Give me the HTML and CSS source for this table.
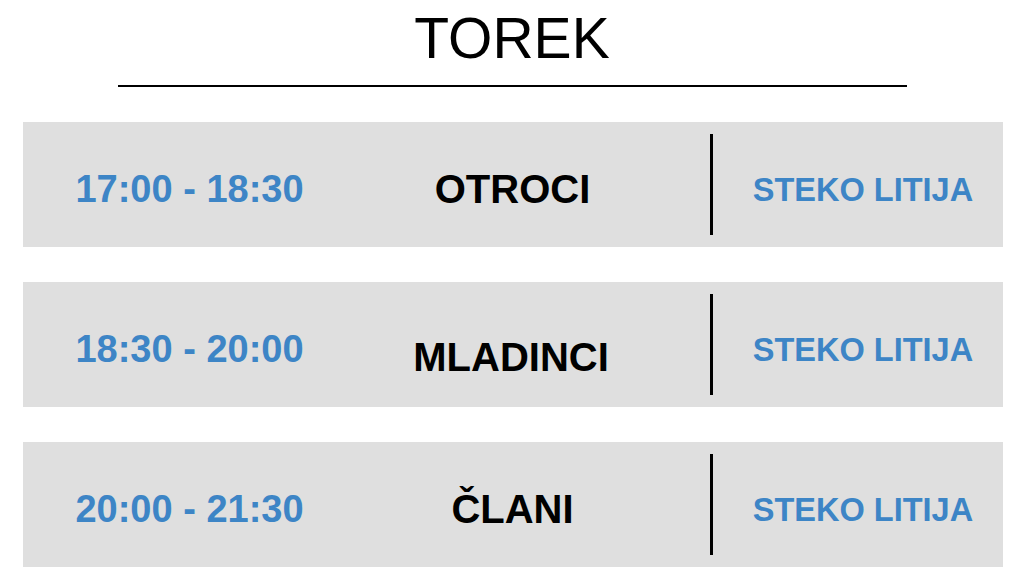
FILE: index.html
```html
<!DOCTYPE html>
<html lang="sl">
<head>
<meta charset="utf-8">
<title>Torek</title>
<link rel="stylesheet" href="styles.css">
</head>
<body>
<main class="page">
  <h1 class="title">TOREK</h1>
  <hr class="rule">
  <section class="schedule">
    <div class="row">
      <div class="time">17:00 - 18:30</div>
      <div class="group">OTROCI</div>
      <div class="divider"></div>
      <div class="place">STEKO LITIJA</div>
    </div>
    <div class="row">
      <div class="time">18:30 - 20:00</div>
      <div class="group group--low">MLADINCI</div>
      <div class="divider"></div>
      <div class="place">STEKO LITIJA</div>
    </div>
    <div class="row">
      <div class="time">20:00 - 21:30</div>
      <div class="group">ČLANI</div>
      <div class="divider"></div>
      <div class="place">STEKO LITIJA</div>
    </div>
  </section>
</main>
</body>
</html>
```
FILE: styles.css
```css
html, body {
  margin: 0;
  padding: 0;
  background: #ffffff;
}

.page {
  display: flex;
  flex-direction: column;
  align-items: center;
  padding-top: 10px;
  font-family: "Liberation Sans", Arial, sans-serif;
}

.title {
  margin: 0;
  font-size: 57px;
  line-height: 57px;
  font-weight: 400;
  color: #000;
  letter-spacing: 0;
}

.rule {
  width: 789px;
  height: 2px;
  margin: 18px 0 0 0;
  border: 0;
  background: #000;
}

.schedule {
  display: flex;
  flex-direction: column;
  gap: 35px;
  margin-top: 35px;
  width: 980px;
  margin-left: 2px;
}

.row {
  display: grid;
  grid-template-columns: 333px 313px 41px 3px 1fr;
  align-items: center;
  height: 125px;
  box-sizing: border-box;
  padding-top: 8px;
  background: #dfdfdf;
}

.time {
  grid-column: 1;
  text-align: center;
  font-size: 38px;
  line-height: 1;
  font-weight: 700;
  color: #3d85c6;
}

.group {
  grid-column: 2;
  text-align: center;
  font-size: 40px;
  line-height: 1;
  font-weight: 700;
  color: #000;
}

.group--low {
  margin-top: 16px;
  margin-right: 3px;
}

.divider {
  grid-column: 4;
  align-self: start;
  margin-top: 4px;
  height: 101px;
  background: #000;
}

.place {
  grid-column: 5;
  padding-left: 10px;
  margin-top: 4px;
  text-align: center;
  font-size: 32.5px;
  line-height: 1;
  font-weight: 700;
  color: #3d85c6;
}
```
